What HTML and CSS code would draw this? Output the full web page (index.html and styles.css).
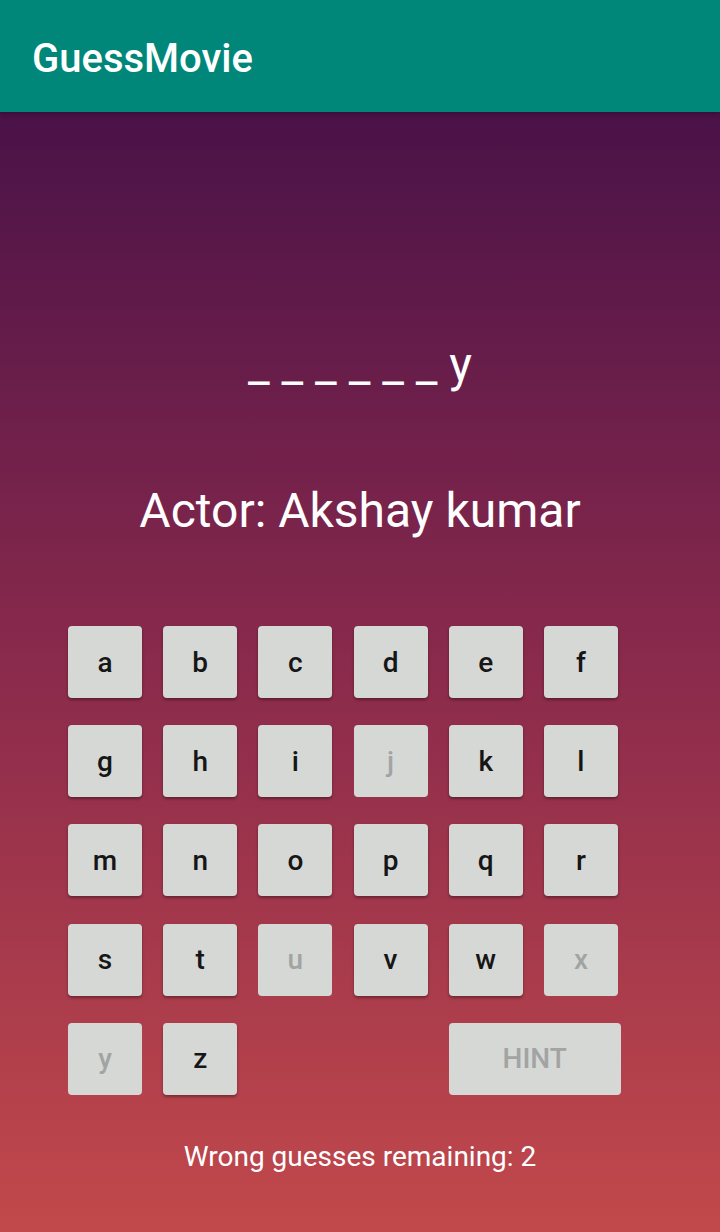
FILE: index.html
```html
<!DOCTYPE html>
<html>
<head>
<meta charset="utf-8">
<title>GuessMovie</title>
<link rel="stylesheet" href="styles.css">
</head>
<body>
<div class="screen">
  <header class="appbar"><span class="title">GuessMovie</span></header>
  <main class="content">
    <div class="word">_ _ _ _ _ _ y</div>
    <div class="clue">Actor: Akshay kumar</div>
    <div class="keyboard">
      <button class="key">a</button>
      <button class="key">b</button>
      <button class="key">c</button>
      <button class="key">d</button>
      <button class="key">e</button>
      <button class="key">f</button>
      <button class="key">g</button>
      <button class="key">h</button>
      <button class="key">i</button>
      <button class="key disabled">j</button>
      <button class="key">k</button>
      <button class="key">l</button>
      <button class="key">m</button>
      <button class="key">n</button>
      <button class="key">o</button>
      <button class="key">p</button>
      <button class="key">q</button>
      <button class="key">r</button>
      <button class="key">s</button>
      <button class="key">t</button>
      <button class="key disabled">u</button>
      <button class="key">v</button>
      <button class="key">w</button>
      <button class="key disabled">x</button>
      <button class="key disabled">y</button>
      <button class="key">z</button>
      <button class="key hint disabled">HINT</button>
    </div>
    <div class="remaining">Wrong guesses remaining: 2</div>
  </main>
</div>
</body>
</html>
```

FILE: styles.css
```css
* { box-sizing: border-box; }
html, body {
  margin: 0;
  padding: 0;
  width: 720px;
  height: 1232px;
  overflow: hidden;
  font-family: Roboto, "Noto Sans", sans-serif;
}
.screen {
  width: 720px;
  height: 1232px;
  display: flex;
  flex-direction: column;
}
.appbar {
  height: 112px;
  flex: 0 0 112px;
  background: #00877a;
  display: flex;
  align-items: center;
  padding: 4px 0 0 32px;
  position: relative;
  z-index: 2;
  box-shadow: 0 2px 4px rgba(0,0,0,0.25);
}
.title {
  color: #ffffff;
  font-size: 40px;
  font-weight: 500;
}
.content {
  flex: 1;
  background: linear-gradient(to bottom, #4a1248 0%, #8a2a4c 49%, #c2494b 100%);
  display: flex;
  flex-direction: column;
  align-items: center;
  padding-top: 225px;
  color: #ffffff;
}
.word {
  font-size: 48px;
  line-height: 56px;
  white-space: pre;
}
.clue {
  margin-top: 90px;
  font-size: 48px;
  line-height: 56px;
}
.keyboard {
  margin-top: 87px;
  width: 720px;
  padding-left: 68px;
  display: grid;
  grid-template-columns: repeat(6, 74px);
  grid-auto-rows: 72px;
  column-gap: 21.2px;
  row-gap: 27.2px;
}
.key {
  width: 74px;
  height: 72px;
  border: none;
  border-radius: 4px;
  background: #d6d8d6;
  box-shadow: 0 2px 3px rgba(0,0,0,0.35);
  font-family: Roboto, "Noto Sans", sans-serif;
  font-size: 28px;
  font-weight: 500;
  color: #161616;
  display: flex;
  align-items: center;
  justify-content: center;
  padding: 0;
}
.key.disabled {
  color: #a2a4a3;
  box-shadow: none;
}
.hint {
  grid-column: 5 / span 2;
  width: 172px;
}
.remaining {
  margin-top: 45px;
  font-size: 28px;
  line-height: 33px;
}
```
